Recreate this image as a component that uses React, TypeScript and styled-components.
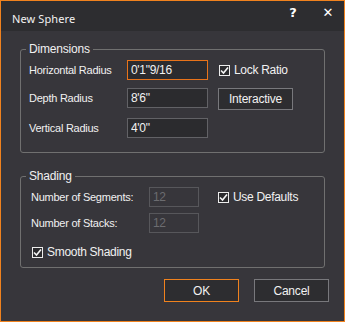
import React from "react";
import styled, { createGlobalStyle } from "styled-components";

const ORANGE = "#f0821e";

const GlobalStyle = createGlobalStyle`
  html, body { margin: 0; padding: 0; background: #37363b; }
  * { box-sizing: border-box; }
`;

const Window = styled.div`
  width: 345px;
  height: 322px;
  border: 1px solid ${ORANGE};
  background: #37363b;
  display: flex;
  flex-direction: column;
  font-family: "Liberation Sans", Arial, sans-serif;
  font-size: 11px;
  color: #f1f1f1;
`;

const TitleBar = styled.div`
  height: 30px;
  background: #2d2d30;
  display: flex;
  align-items: flex-start;
  gap: 3px;
  padding-left: 11px;
`;

const Title = styled.div`
  flex: 1;
  padding-top: 10px;
  font-family: "Noto Sans", "Open Sans", sans-serif;
  font-size: 11px;
  letter-spacing: 0.1px;
  line-height: 16px;
  color: #f2f2f2;
`;

const TitleButton = styled.div`
  width: 32px;
  height: 22px;
  display: flex;
  align-items: center;
  justify-content: center;
  font-family: "DejaVu Sans", sans-serif;
  font-weight: bold;
  font-size: 13px;
  color: #ffffff;
`;

const Content = styled.div`
  padding: 11px 19px 0;
  display: flex;
  flex-direction: column;
`;

const Group = styled.fieldset<{ $padLeft: number; $padBottom: number; $gapTop?: number }>`
  margin: ${(p) => p.$gapTop ?? 0}px 0 0 0;
  padding: 4px 8px ${(p) => p.$padBottom}px ${(p) => p.$padLeft}px;
  border: 1px solid #707070;
  border-radius: 3px;
  min-width: 0;
`;

const Legend = styled.legend<{ $shift: number }>`
  padding: 0 3px;
  margin-left: ${(p) => -p.$shift}px;
  line-height: 14px;
  font-size: 12px;
  letter-spacing: -0.2px;
`;

const FormGrid = styled.div<{ $label: number; $field: number; $rowGap: number }>`
  display: grid;
  grid-template-columns: ${(p) => p.$label}px ${(p) => p.$field}px auto;
  column-gap: 0;
  row-gap: ${(p) => p.$rowGap}px;
  align-items: start;
`;

const Label = styled.div`
  height: 20px;
  display: flex;
  align-items: center;
  font-size: 11px;
  letter-spacing: -0.25px;
  white-space: nowrap;
`;

const TextBox = styled.input<{ $focused?: boolean; $disabled?: boolean }>`
  width: 100%;
  height: 20px;
  margin: 0;
  padding: 0 3px;
  border: 1px solid
    ${(p) => (p.$focused ? "#e8731a" : p.$disabled ? "#57575b" : "#626266")};
  background: ${(p) => (p.$disabled ? "#37363b" : "#2b2b2e")};
  color: ${(p) => (p.$disabled ? "#6c6c70" : "#f1f1f1")};
  font-family: "Liberation Sans", Arial, sans-serif;
  font-size: 12px;
  letter-spacing: -0.3px;
  outline: none;
`;

const CheckRow = styled.label<{ $span?: boolean; $top?: number; $ml?: number }>`
  height: ${(p) => (p.$span ? 16 : 20)}px;
  display: flex;
  align-items: center;
  gap: 4px;
  font-size: 12px;
  letter-spacing: -0.3px;
  white-space: nowrap;
  ${(p) => (p.$span ? "grid-column: 1 / -1;" : "")}
  margin-top: ${(p) => p.$top ?? 0}px;
  margin-left: ${(p) => p.$ml ?? 0}px;
  padding-left: ${(p) => (p.$span ? 1 : 0)}px;
`;

const Box = styled.span`
  width: 11px;
  height: 11px;
  border: 1px solid #ededed;
  background: #2b2b2e;
  display: flex;
  align-items: center;
  justify-content: center;
  flex: none;
`;

const Button = styled.button<{ $primary?: boolean; $h: number; $ml?: number }>`
  width: 75px;
  height: ${(p) => p.$h}px;
  margin: 0 0 0 ${(p) => p.$ml ?? 0}px;
  padding: 0;
  border: 1px solid ${(p) => (p.$primary ? ORANGE : "#78787c")};
  background: #2d2d30;
  color: #f1f1f1;
  font-family: "Liberation Sans", Arial, sans-serif;
  font-size: 12px;
  letter-spacing: -0.2px;
`;

const Footer = styled.div`
  display: flex;
  justify-content: flex-end;
  gap: 15px;
  padding: 11px 15px 0 0;
`;

const Check = () => (
  <Box>
    <svg width="9" height="9" viewBox="0 0 9 9">
      <path d="M1 4.5 L3.5 7 L8 1.5" fill="none" stroke="#f4f4f4" strokeWidth="1.6" />
    </svg>
  </Box>
);

export default function App() {
  return (
    <>
      <GlobalStyle />
      <Window>
        <TitleBar>
          <Title>New Sphere</Title>
          <TitleButton>?</TitleButton>
          <TitleButton>✕</TitleButton>
        </TitleBar>
        <Content>
          <Group $padLeft={8} $padBottom={14}>
            <Legend $shift={3}>Dimensions</Legend>
            <FormGrid $label={98} $field={81} $rowGap={8}>
              <Label>Horizontal Radius</Label>
              <TextBox $focused readOnly defaultValue={`0'1"9/16`} />
              <CheckRow $ml={11}>
                <Check />
                Lock Ratio
              </CheckRow>
              <Label>Depth Radius</Label>
              <TextBox readOnly defaultValue={`8'6"`} />
              <Button $h={22} $ml={10}>Interactive</Button>
              <Label>Vertical Radius</Label>
              <TextBox readOnly defaultValue={`4'0"`} />
              <span />
            </FormGrid>
          </Group>
          <Group $padLeft={10} $padBottom={7} $gapTop={16}>
            <Legend $shift={5}>Shading</Legend>
            <FormGrid $label={118} $field={50} $rowGap={6}>
              <Label>Number of Segments:</Label>
              <TextBox $disabled disabled defaultValue="12" />
              <CheckRow $ml={19}>
                <Check />
                Use Defaults
              </CheckRow>
              <Label>Number of Stacks:</Label>
              <TextBox $disabled disabled defaultValue="12" />
              <span />
              <CheckRow $span $top={5}>
                <Check />
                Smooth Shading
              </CheckRow>
            </FormGrid>
          </Group>
        </Content>
        <Footer>
          <Button $primary $h={23}>OK</Button>
          <Button $h={23}>Cancel</Button>
        </Footer>
      </Window>
    </>
  );
}
